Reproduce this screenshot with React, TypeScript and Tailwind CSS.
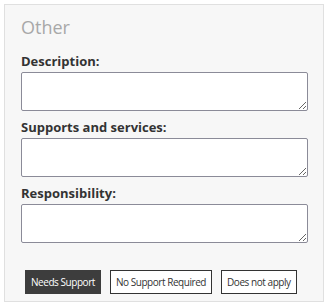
import React from 'react';

const fields = ['Description:', 'Supports and services:', 'Responsibility:'];

const options = [
  { label: 'Needs Support', active: true },
  { label: 'No Support Required', active: false },
  { label: 'Does not apply', active: false },
];

export default function App() {
  return (
    <div className="p-1 bg-white" style={{ fontFamily: '"Open Sans", "Noto Sans", sans-serif' }}>
      <div className="w-[320px] h-[298px] border border-[#e0e0e0] bg-[#f7f7f7] px-4 pt-[10px]">
        <h2 className="text-[18px] leading-[24px] text-[#a8a8a8] font-normal">Other</h2>

        <div className="mt-[13px] flex flex-col gap-[7px]">
          {fields.map((f) => (
            <div key={f} className="flex flex-col">
              <label className="text-[13px] leading-[18px] font-bold text-[#333] mb-[2px]">{f}</label>
              <textarea className="h-[39px] w-[287px] bg-white border border-[#8b8b98] rounded-[2px] text-[13px]" />
            </div>
          ))}
        </div>

        <div className="mt-[27px] flex gap-[9px] pl-1">
          {options.map((o) => (
            <button
              key={o.label}
              className={`h-[24px] px-[5px] text-[10px] tracking-[-0.45px] leading-none whitespace-nowrap border ${
                o.active ? 'bg-[#3d3d3d] border-[#3d3d3d] text-white' : 'bg-white border-[#333] text-[#333]'
              }`}
            >
              {o.label}
            </button>
          ))}
        </div>
      </div>
    </div>
  );
}
